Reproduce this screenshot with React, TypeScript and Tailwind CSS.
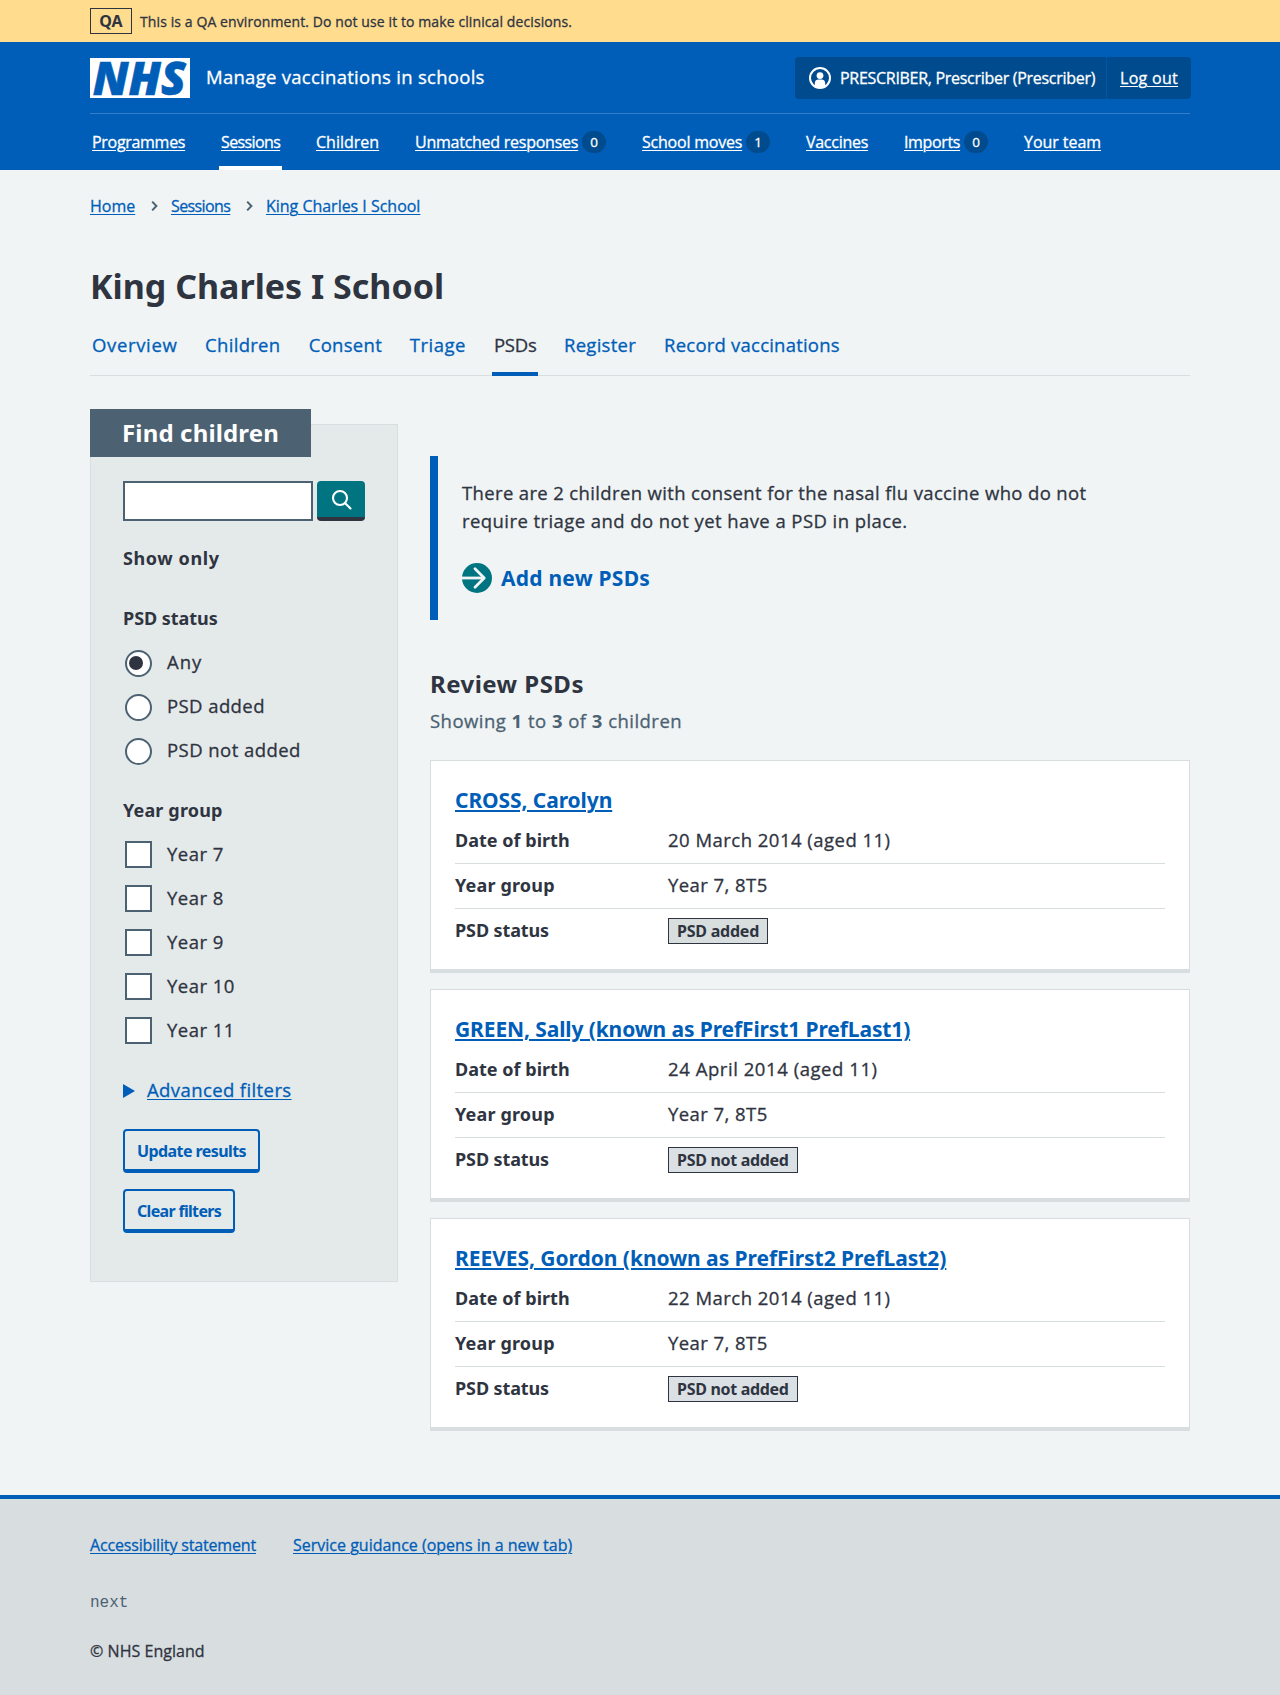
import type { ReactNode } from "react";

const navItems = [
  { label: "Programmes", text: "w-[93px] tracking-[-0.3px]" },
  { label: "Sessions", text: "w-[59px] tracking-[-0.62px]", active: true },
  { label: "Children", text: "w-[63px]" },
  { label: "Unmatched responses", text: "w-[163px] tracking-[-0.25px]", count: 0 },
  { label: "School moves", text: "w-[100px] tracking-[-0.22px]", count: 1 },
  { label: "Vaccines", text: "w-[62px] tracking-[-0.28px]" },
  { label: "Imports", text: "w-[56px] tracking-[-0.35px]", count: 0 },
  { label: "Your team", text: "w-[77px] tracking-[-0.05px]" },
];

const tabs = [
  { label: "Overview", text: "w-[85px] tracking-[0.65px]" },
  { label: "Children", text: "w-[75.5px] tracking-[0.3px]" },
  { label: "Consent", text: "w-[73px] tracking-[0.3px]" },
  { label: "Triage", text: "w-[56px] tracking-[0.5px]" },
  { label: "PSDs", text: "w-[42px] tracking-[-0.2px]", active: true },
  { label: "Register", text: "w-[72px] tracking-[0.28px]" },
  { label: "Record vaccinations", text: "w-[175px] tracking-[0.22px]" },
];

const people = [
  { name: "CROSS, Carolyn", dob: "20 March 2014 (aged 11)", added: true, tracking: "tracking-[-0.09px]", dobTracking: "tracking-[0.48px]" },
  { name: "GREEN, Sally (known as PrefFirst1 PrefLast1)", dob: "24 April 2014 (aged 11)", added: false, tracking: "tracking-[-0.11px]", dobTracking: "tracking-[0.56px]" },
  { name: "REEVES, Gordon (known as PrefFirst2 PrefLast2)", dob: "22 March 2014 (aged 11)", added: false, tracking: "tracking-[-0.045px]", dobTracking: "tracking-[0.48px]" },
];

const bold = "font-['Noto_Sans','Open_Sans',sans-serif] font-bold [-webkit-text-stroke-width:0px]";

function Container({ children, className = "" }: { children: ReactNode; className?: string }) {
  return <div className={`mx-auto w-[1100px] ${className}`}>{children}</div>;
}

function Logo() {
  return (
    <svg width="100" height="40" viewBox="0 0 100 40" className="shrink-0 overflow-visible">
      <rect width="100" height="40" fill="#fff" />
      <text
        x="2.8"
        y="36.7"
        fontFamily="Open Sans, Noto Sans, sans-serif"
        fontSize="46.5"
        fontWeight="800"
        fontStyle="italic"
        fill="#005eb8"
        stroke="#005eb8"
        strokeWidth="0.6"
        textLength="93"
        lengthAdjust="spacingAndGlyphs"
      >
        NHS
      </text>
    </svg>
  );
}

function Chevron() {
  return (
    <svg width="7" height="12" viewBox="0 0 7 12" fill="none" stroke="#4c6272" strokeWidth="2" className="-ml-px mr-px">
      <path d="M1.2 1.6 5.4 6 1.2 10.4" />
    </svg>
  );
}

function Option({ label, type, checked, text }: { label: string; type: "radio" | "checkbox"; checked?: boolean; text: string }) {
  return (
    <label className="flex h-11 items-center pl-[1.5px]">
      {type === "radio" ? (
        <span className="flex size-[27px] items-center rounded-full border-2 border-[#4c6272] bg-white pl-[2.5px]">
          {checked && <span className="size-[14px] rounded-full bg-[#2f3441]" />}
        </span>
      ) : (
        <span className="size-[27px] border-2 border-[#4c6272] bg-white" />
      )}
      <span className={`ml-[15.5px] pb-px leading-6 whitespace-nowrap ${text}`}>{label}</span>
    </label>
  );
}

function Row({ label, tracking, last, children }: { label: string; tracking: string; last?: boolean; children: ReactNode }) {
  return (
    <div className={`flex h-[45px] leading-[42px] ${last ? "" : "border-b border-[#d8dde0]"}`}>
      <dt className={`w-[213px] text-[18px] ${bold} ${tracking}`}>{label}</dt>
      <dd>{children}</dd>
    </div>
  );
}

function PersonCard({ name, dob, added, tracking, dobTracking }: (typeof people)[number]) {
  return (
    <div className="h-[213px] border border-b-4 border-[#d8dde0] bg-white px-6 pt-6">
      <h3 className={`text-[21px] leading-[30px] whitespace-nowrap text-[#005eb8] underline decoration-2 underline-offset-2 ${tracking} ${bold}`}>
        {name}
      </h3>
      <dl className="mt-1">
        <Row label="Date of birth" tracking="tracking-[0.02px]">
          <span className={dobTracking}>{dob}</span>
        </Row>
        <Row label="Year group" tracking="tracking-[0.17px]">
          <span className="tracking-[0.44px]">Year 7, 8T5</span>
        </Row>
        <Row label="PSD status" tracking="tracking-[-0.11px]" last>
          <span
            className={`mt-[9px] flex h-[26px] items-center border border-[#2f3441] pl-2 text-[16px] leading-6 whitespace-nowrap ${bold} ${
              added ? "w-[100px] bg-[#d8dddd] tracking-[-0.23px]" : "w-[130px] bg-[#dbe0e4] tracking-[-0.31px]"
            }`}
          >
            {added ? "PSD added" : "PSD not added"}
          </span>
        </Row>
      </dl>
    </div>
  );
}

function OutlineButton({ children, className }: { children: ReactNode; className: string }) {
  return (
    <button
      className={`block h-11 rounded-[4px] border-2 border-b-4 border-[#005eb8] pt-px pl-3 text-left text-[16px] leading-9 whitespace-nowrap text-[#005eb8] ${bold} ${className}`}
    >
      {children}
    </button>
  );
}

export default function App() {
  return (
    <div className="min-h-[1695px] bg-[#f0f4f5] font-['Open_Sans','Noto_Sans',sans-serif] text-[18.5px] text-[#2f3441] [-webkit-text-stroke-width:0.3px]">
      <div className="bg-[#ffdc8e]">
        <Container className="flex h-[42px] items-center">
          <span className={`flex h-[26px] w-[42px] items-center justify-center border border-[#2f3441] text-[16px] ${bold}`}>QA</span>
          <span className="ml-2 text-[14px] tracking-[0.1px]">This is a QA environment. Do not use it to make clinical decisions.</span>
        </Container>
      </div>

      <header className="bg-[#005eb8] text-white">
        <Container>
          <div className="flex h-[72px] items-start border-b border-[#337ec6] pt-4">
            <Logo />
            <span className="ml-4 leading-[38px] tracking-[0.28px]">Manage vaccinations in schools</span>
            <div className="-mt-px -mr-px ml-auto flex h-[42px] w-[396px] rounded-[4px] bg-[#004b8e] text-[16px] leading-[42px] whitespace-nowrap">
              <div className="flex w-[312px] items-center border-r border-[#0057a8] pl-[14px]">
                <svg width="22" height="22" viewBox="0 0 22 22" className="shrink-0">
                  <circle cx="11" cy="11" r="10" fill="none" stroke="#fff" strokeWidth="2" />
                  <circle cx="11" cy="8.6" r="3.4" fill="#fff" />
                  <path d="M5.8 19V16.4a3.8 3.8 0 0 1 3.8-3.8h2.8a3.8 3.8 0 0 1 3.8 3.8V19A10 10 0 0 1 5.8 19Z" fill="#fff" />
                </svg>
                <span className="ml-[9px] tracking-[-0.29px]">PRESCRIBER, Prescriber (Prescriber)</span>
              </div>
              <a className="ml-[13px] tracking-[0.3px] underline decoration-1 underline-offset-2">Log out</a>
            </div>
          </div>
          <nav className="flex h-14 gap-8 text-[16px] whitespace-nowrap">
            {navItems.map((item) => (
              <a key={item.label} className={`flex items-center border-b-4 px-[2px] pt-1 ${item.active ? "border-white" : "border-transparent"}`}>
                <span className={`underline decoration-1 underline-offset-2 ${item.text}`}>{item.label}</span>
                {item.count !== undefined && (
                  <span className="ml-1 flex h-[22px] w-6 items-center justify-center rounded-full bg-[#004b8e] text-[13.5px]">{item.count}</span>
                )}
              </a>
            ))}
          </nav>
        </Container>
      </header>

      <Container>
        <nav className="flex items-center pt-6 text-[16px] leading-6 whitespace-nowrap text-[#005eb8]">
          <a className="w-[62px] underline decoration-1 underline-offset-2">Home</a>
          <Chevron />
          <a className="ml-3 w-[76px] tracking-[-0.6px] underline decoration-1 underline-offset-2">Sessions</a>
          <Chevron />
          <a className="ml-[12px] tracking-[-0.02px] underline decoration-1 underline-offset-2">King Charles I School</a>
        </nav>

        <h1 className={`mt-[46px] text-[34px] leading-[44px] ${bold}`}>King Charles I School</h1>

        <nav className="mt-[6px] flex h-[62px] gap-[24.1px] border-b border-[#d8dde0] whitespace-nowrap text-[#005eb8]">
          {tabs.map((tab) => (
            <a
              key={tab.label}
              className={`-mb-px flex items-center border-b-4 px-[2px] pt-1 ${tab.active ? "border-[#005eb8] text-[#2f3441]" : "border-transparent"}`}
            >
              <span className={tab.text}>{tab.label}</span>
            </a>
          ))}
        </nav>

        <div className="flex items-start gap-8">
          <aside className="mt-12 w-[308px] border border-[#d8dde0] bg-[#e4e9e9] pb-12 pl-8">
            <h2 className={`-mt-4 -ml-[33px] h-12 w-[221px] bg-[#4c6272] pl-8 text-[24px] leading-[48px] tracking-[0.15px] text-white ${bold}`}>
              Find children
            </h2>
            <div className="mt-6 flex gap-1">
              <input className="h-10 w-[190px] border-2 border-[#4c6272] bg-white outline-none" aria-label="Search" />
              <button className="flex h-10 w-12 items-center justify-center rounded-[4px] border-b-4 border-[#2f3441] bg-[#007480] pt-px pl-px" aria-label="Search">
                <svg width="22" height="22" viewBox="0 0 22 22" fill="none" stroke="#fff" strokeWidth="2.1" strokeLinecap="round">
                  <circle cx="9" cy="9" r="7" />
                  <path d="m14.2 14.2 5.3 5.3" />
                </svg>
              </button>
            </div>
            <h3 className={`mt-[23px] text-[18px] leading-7 tracking-[0.6px] ${bold}`}>Show only</h3>

            <h4 className={`mt-8 text-[18px] leading-7 tracking-[-0.05px] ${bold}`}>PSD status</h4>
            <div className="mt-[9px]">
              <Option type="radio" label="Any" text="-mt-px tracking-[1px]" checked />
              <Option type="radio" label="PSD added" text="-mt-px tracking-[0.42px]" />
              <Option type="radio" label="PSD not added" text="-mt-px tracking-[0.45px]" />
            </div>

            <h4 className={`mt-[23px] text-[18px] leading-7 tracking-[0.15px] ${bold}`}>Year group</h4>
            <div className="mt-2">
              {["Year 7", "Year 8", "Year 9", "Year 10", "Year 11"].map((year) => (
                <Option key={year} type="checkbox" label={year} text="tracking-[0.48px]" />
              ))}
            </div>

            <div className="mt-6 flex h-7 items-center text-[#005eb8]">
              <svg width="12" height="14" viewBox="0 0 12 14" className="mt-px">
                <path d="M0 0 12 7 0 14Z" fill="#005eb8" />
              </svg>
              <span className="ml-3 leading-7 tracking-[0.4px] underline decoration-1 underline-offset-2">Advanced filters</span>
            </div>
            <OutlineButton className="mt-[25px] w-[137px] tracking-[-0.58px]">Update results</OutlineButton>
            <OutlineButton className="mt-4 w-[112px] tracking-[-0.68px]">Clear filters</OutlineButton>
          </aside>

          <main className="mt-20 w-[760px]">
            <div className="h-[164px] border-l-8 border-[#005eb8] pt-[23px] pl-6 whitespace-nowrap">
              <p className="leading-7 tracking-[0.355px]">
                There are 2 children with consent for the nasal flu vaccine who do not
                <br />
                <span className="tracking-[0.43px]">require triage and do not yet have a PSD in place.</span>
              </p>
              <a className={`mt-7 flex h-[30px] items-center text-[21px] leading-[30px] tracking-[0.23px] text-[#005eb8] ${bold}`}>
                <svg width="30" height="30" viewBox="0 0 30 30" fill="none" stroke="#f0f4f5" strokeWidth="2.8" className="mr-[9px]">
                  <circle cx="15" cy="15" r="15" fill="#007480" stroke="none" />
                  <path d="M0 15H21" />
                  <path d="m13 5.8 9.2 9.2-9.2 9.2" strokeLinecap="round" strokeLinejoin="round" />
                </svg>
                Add new PSDs
              </a>
            </div>

            <h2 className={`mt-[46px] text-[24px] leading-9 tracking-[0.46px] ${bold}`}>Review PSDs</h2>
            <p className="mt-[5px] leading-7 tracking-[0.47px] text-[#4c6272]">
              Showing <b className="font-bold [-webkit-text-stroke-width:0px]">1</b> to{" "}
              <b className="font-bold [-webkit-text-stroke-width:0px]">3</b> of <b className="font-bold [-webkit-text-stroke-width:0px]">3</b> children
            </p>

            <div className="mt-[25px] flex flex-col gap-4">
              {people.map((person) => (
                <PersonCard key={person.name} {...person} />
              ))}
            </div>
          </main>
        </div>
      </Container>

      <footer className="mt-16 h-[200px] border-t-4 border-[#005eb8] bg-[#d8dddf] text-[16px] leading-6">
        <Container className="pt-[34px]">
          <div className="flex whitespace-nowrap text-[#005eb8]">
            <a className="w-[166px] tracking-[-0.16px] underline decoration-1 underline-offset-2">Accessibility statement</a>
            <a className="ml-[37px] underline decoration-1 underline-offset-2">Service guidance (opens in a new tab)</a>
          </div>
          <p className="mt-[34px] font-['Liberation_Mono',monospace] text-[#4c6272] [-webkit-text-stroke-width:0px]">next</p>
          <p className="mt-6 tracking-[0.04px]">© NHS England</p>
        </Container>
      </footer>
    </div>
  );
}
